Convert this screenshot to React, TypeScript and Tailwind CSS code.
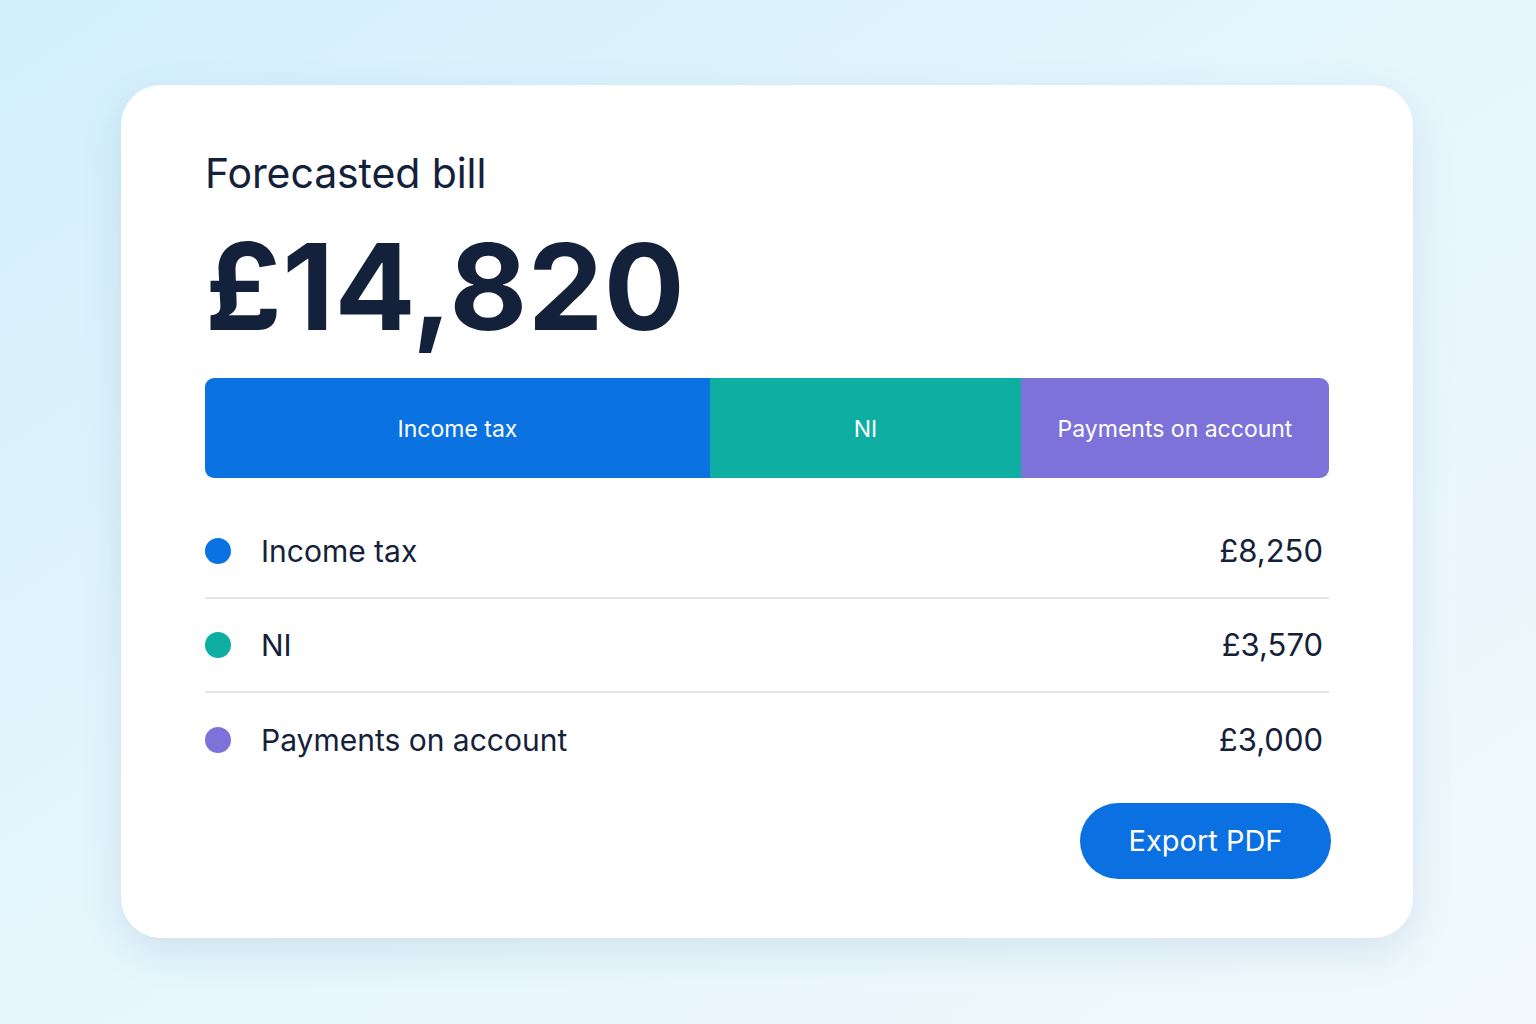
import React from "react";

type Part = { label: string; amount: string; value: number; color: string; dot: string };

const parts: Part[] = [
  { label: "Income tax", amount: "£8,250", value: 505, color: "bg-[#0b72e1]", dot: "bg-[#0b72e1]" },
  { label: "NI", amount: "£3,570", value: 311, color: "bg-[#0eaea3]", dot: "bg-[#0eaea3]" },
  { label: "Payments on account", amount: "£3,000", value: 308, color: "bg-[#7c72d9]", dot: "bg-[#7c72d9]" },
];

export default function App() {
  return (
    <div
      className="min-h-[1024px] w-full bg-gradient-to-br from-[#d2effb] via-[#e6f6fd] to-[#f1f9fd] pt-[85px] pl-[121px] text-[#14213a]"
      style={{ fontFamily: "Inter, 'Noto Sans', sans-serif" }}
    >
      <div className="w-[1292px] h-[853px] rounded-[40px] bg-white shadow-[0_14px_40px_rgba(60,110,150,0.14)] px-[84px] pt-[60px]">
        <h2 className="text-[41px] leading-[56px] font-normal tracking-[-0.1px]">Forecasted bill</h2>
        <div className="mt-[16px] text-[120px] leading-[140px] font-bold tracking-[0.5px]">£14,820</div>

        {/* stacked bar */}
        <div className="mt-[21px] flex h-[100px] w-full overflow-hidden rounded-[9px]">
          {parts.map((p) => (
            <div
              key={p.label}
              className={`${p.color} flex items-center justify-center pt-[3px] text-white text-[23px]`}
              style={{ flexGrow: p.value, flexBasis: 0 }}
            >
              {p.label}
            </div>
          ))}
        </div>

        {/* breakdown */}
        <div className="mt-[27px] flex flex-col">
          {parts.map((p, i) => (
            <div
              key={p.label}
              className={`flex items-center justify-between h-[94px] pr-[6px] ${i < parts.length - 1 ? "border-b-2 border-[#e3e5eb]" : ""}`}
            >
              <div className="flex items-center gap-[30px]">
                <span className={`${p.dot} w-[26px] h-[26px] rounded-full`} />
                <span className="text-[30px]">{p.label}</span>
              </div>
              <span className="text-[31px]">{p.amount}</span>
            </div>
          ))}
        </div>

        <div className="flex justify-end -mr-[2px] mt-[16px]">
          <button className="h-[76px] w-[251px] rounded-full bg-[#0b70e1] text-white text-[29px]">Export PDF</button>
        </div>
      </div>
    </div>
  );
}
